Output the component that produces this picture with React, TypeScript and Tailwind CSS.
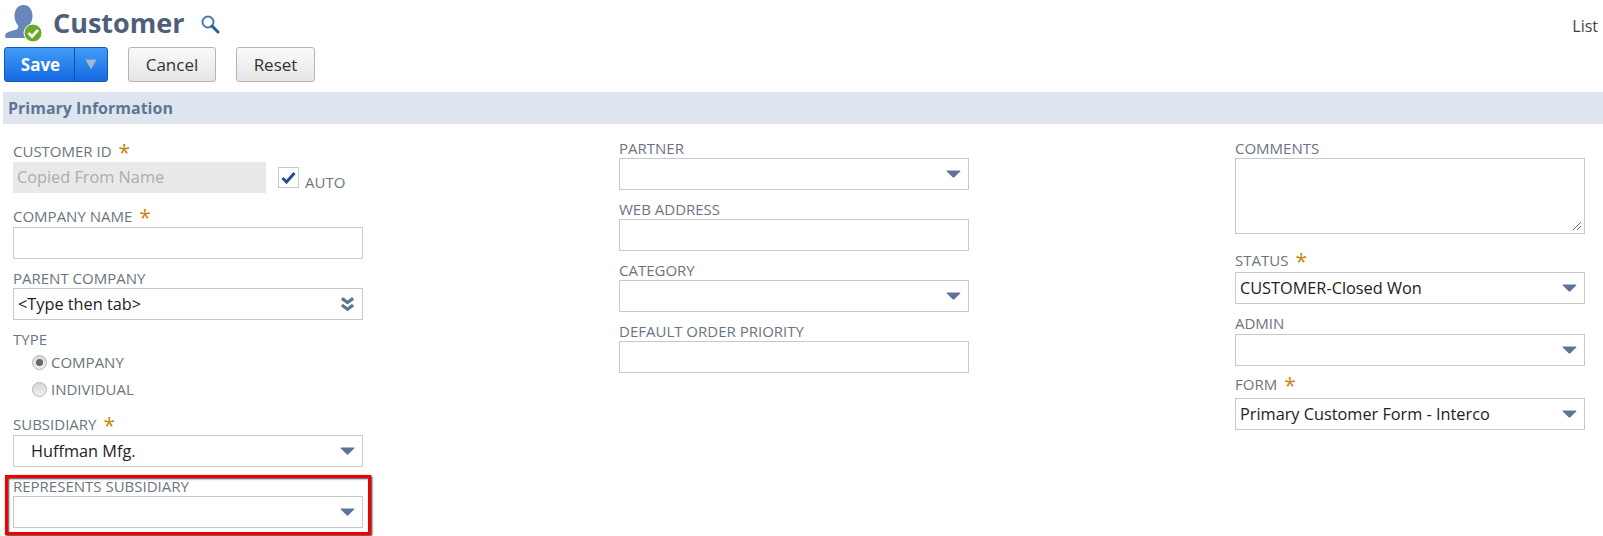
import type { ReactNode } from "react";

const Star = () => <span className="relative -top-[1px] ml-[7px] inline-block h-[14px] align-top text-[21px] leading-[24px] text-[#c8860d]">*</span>;

function Label({ children, required, className = "" }: { children: ReactNode; required?: boolean; className?: string }) {
  return (
    <div className={`h-[20px] text-[15px] leading-[20px] text-[#6b7480] whitespace-nowrap ${className}`}>
      {children}
      {required && <Star />}
    </div>
  );
}

function Caret() {
  return (
    <svg width="15" height="8" viewBox="0 0 16 9" className="absolute right-[7px] top-[11px]">
      <path d="M1 0.5H15C15.8 0.5 16 1.2 15.5 1.8L9 8.2C8.4 8.8 7.6 8.8 7 8.2L0.5 1.8C0 1.2 0.2 0.5 1 0.5Z" fill="#5d7599" />
    </svg>
  );
}

function Box({ children, pl = "pl-[4px]" }: { children?: ReactNode; pl?: string }) {
  return (
    <div className={`relative flex h-[32px] w-[350px] items-center border border-[#c9c9c9] bg-white text-[16.3px] text-[#222] ${pl}`}>
      {children}
    </div>
  );
}

function Select({ value, pl }: { value?: string; pl?: string }) {
  return (
    <Box pl={pl}>
      {value}
      <Caret />
    </Box>
  );
}

function PersonIcon() {
  return (
    <svg width="38" height="38" viewBox="0 0 38 38" className="shrink-0">
      <path
        d="M18.500 1C24 1 27.500 5.500 27.500 12C27.500 16 26 19 24 21.500C23.500 23 24 24.500 25.500 25.500C29 26.500 33 27.500 35 30C35.500 33 35 34 33 34H2C0 34 0 33 0.500 30C2.500 27.500 8 26.500 11.500 25.500C13 24.500 13.500 23 13 21.500C11 19 9.500 16 9.500 12C9.500 5.500 13 1 18.500 1Z"
        fill="#6787bb"
      />
      <circle cx="28" cy="29" r="9" fill="#6ba92a" stroke="#fff" strokeWidth="1" />
      <path d="M23.500 29L27 32.500L33 26" fill="none" stroke="#fff" strokeWidth="2.600" />
    </svg>
  );
}

function RadioRow({ label, checked }: { label: string; checked?: boolean }) {
  return (
    <div className="flex h-[27px] items-center pl-[19px]">
      <span className="flex h-[15px] w-[15px] items-center justify-center rounded-full border border-[#b4b4b4] bg-gradient-to-b from-[#d8d8d8] to-[#f0f0f0]">
        {checked && <span className="h-[7px] w-[7px] rounded-full bg-[#666]" />}
      </span>
      <span className="ml-[4px] text-[15px] text-[#6b7480]">{label}</span>
    </div>
  );
}

const grayButton =
  "flex h-[35px] items-center justify-center rounded-[3px] border border-[#b5b5b5] bg-gradient-to-b from-[#fafafa] to-[#e6e6e6] text-[17px] font-medium text-[#333]";

export default function App() {
  return (
    <div className="h-[536px] w-[1603px] overflow-hidden bg-white font-['Open_Sans',sans-serif]">
      <div className="flex h-[47px] items-start pl-[5px] pr-[5px] pt-[4px]">
        <PersonIcon />
        <h1 className="ml-[10px] mt-[1px] text-[27px] font-bold leading-[36px] text-[#4d5f79]">Customer</h1>
        <svg width="20" height="20" viewBox="0 0 20 20" className="ml-[15px] mt-[10px]">
          <circle cx="8" cy="8" r="5.500" fill="none" stroke="#4a79ae" strokeWidth="2" />
          <path d="M12 12L18 18" stroke="#2c5d99" strokeWidth="3" strokeLinecap="round" />
        </svg>
        <span className="ml-auto mt-[12px] text-[16px] leading-[20px] text-[#444]">List</span>
      </div>

      <div className="flex h-[45px] items-start pl-[4px]">
        <div className="flex h-[35px] w-[104px] rounded-[3px] border border-[#1458b0] bg-gradient-to-b from-[#419bf7] to-[#1569e2]">
          <div className="flex w-[70px] items-center justify-center border-r border-[#14509f] pl-[2px] text-[17px] font-bold text-white">Save</div>
          <div className="flex flex-1 items-center justify-center">
            <svg width="12" height="11" viewBox="0 0 12 11"><path d="M0.500 0.500H11.500L6 10.500Z" fill="#a3b8d0" /></svg>
          </div>
        </div>
        <button className={`${grayButton} ml-[20px] w-[88px]`}>Cancel</button>
        <button className={`${grayButton} ml-[20px] w-[79px]`}>Reset</button>
      </div>

      <div className="ml-[3px] flex h-[32px] items-center bg-[#dfe5ef] pl-[5px] text-[16px] font-bold text-[#5f7598]">Primary Information</div>

      <div className="flex items-start pt-[18px]">
        <div className="ml-[13px] w-[606px]">
          <Label required className="-mt-[1px] mb-[1px]">CUSTOMER ID</Label>
          <div className="flex items-start">
            <div className="flex h-[31px] w-[253px] items-center bg-[#e9e9e9] pl-[4px] text-[16.3px] text-[#adadad]">Copied From Name</div>
            <div className="ml-[12px] mt-[5px] flex h-[21px] w-[21px] items-center justify-center border border-[#c9c9c9]">
              <svg width="15" height="13" viewBox="0 0 15 13"><path d="M1.500 7L5.500 11L13.500 2" fill="none" stroke="#23508f" strokeWidth="3" /></svg>
            </div>
            <span className="ml-[6px] mt-[10px] text-[15px] leading-[20px] text-[#6b7480]">AUTO</span>
          </div>
          <Label required className="mb-[1px] mt-[13px]">COMPANY NAME</Label>
          <Box />
          <Label className="mt-[9px]">PARENT COMPANY</Label>
          <Box>
            &lt;Type then tab&gt;
            <svg width="15" height="16" viewBox="0 0 16 16" className="absolute right-[7px] top-[7px]">
              <path d="M2 2L8 6.500L14 2M2 9L8 13.500L14 9" fill="none" stroke="#5d7599" strokeWidth="3.400" />
            </svg>
          </Box>
          <Label className="mt-[9px]">TYPE</Label>
          <RadioRow label="COMPANY" checked />
          <RadioRow label="INDIVIDUAL" />
          <Label required className="mb-[1px] mt-[11px]">SUBSIDIARY</Label>
          <Select value="Huffman Mfg." pl="pl-[17px]" />
          <div className="relative mt-[9px]">
            <div className="absolute -left-[8px] -top-[1px] h-[60px] w-[366px] border-[3px] border-[#f00000] shadow-[1px_1px_2px_#222,inset_1px_1px_2px_#444]" />
            <Label>REPRESENTS SUBSIDIARY</Label>
            <Select />
          </div>
        </div>

        <div className="-mt-[4px] w-[616px]">
          <Label>PARTNER</Label>
          <Select />
          <Label className="mt-[9px]">WEB ADDRESS</Label>
          <Box />
          <Label className="mt-[9px]">CATEGORY</Label>
          <Select />
          <Label className="mt-[9px]">DEFAULT ORDER PRIORITY</Label>
          <Box />
        </div>

        <div className="-mt-[4px]">
          <Label>COMMENTS</Label>
          <div className="relative h-[76px] w-[350px] border border-[#c9c9c9]">
            <svg width="10" height="10" viewBox="0 0 10 10" className="absolute bottom-[2px] right-[2px]">
              <path d="M1 9L9 1M5 9L9 5" stroke="#666" strokeWidth="1" />
            </svg>
          </div>
          <Label required className="mb-[2px] mt-[16px]">STATUS</Label>
          <Select value="CUSTOMER-Closed Won" />
          <Label className="mb-[1px] mt-[9px]">ADMIN</Label>
          <Select />
          <Label required className="mb-[4px] mt-[8px]">FORM</Label>
          <Select value="Primary Customer Form - Interco" />
        </div>
      </div>
    </div>
  );
}
